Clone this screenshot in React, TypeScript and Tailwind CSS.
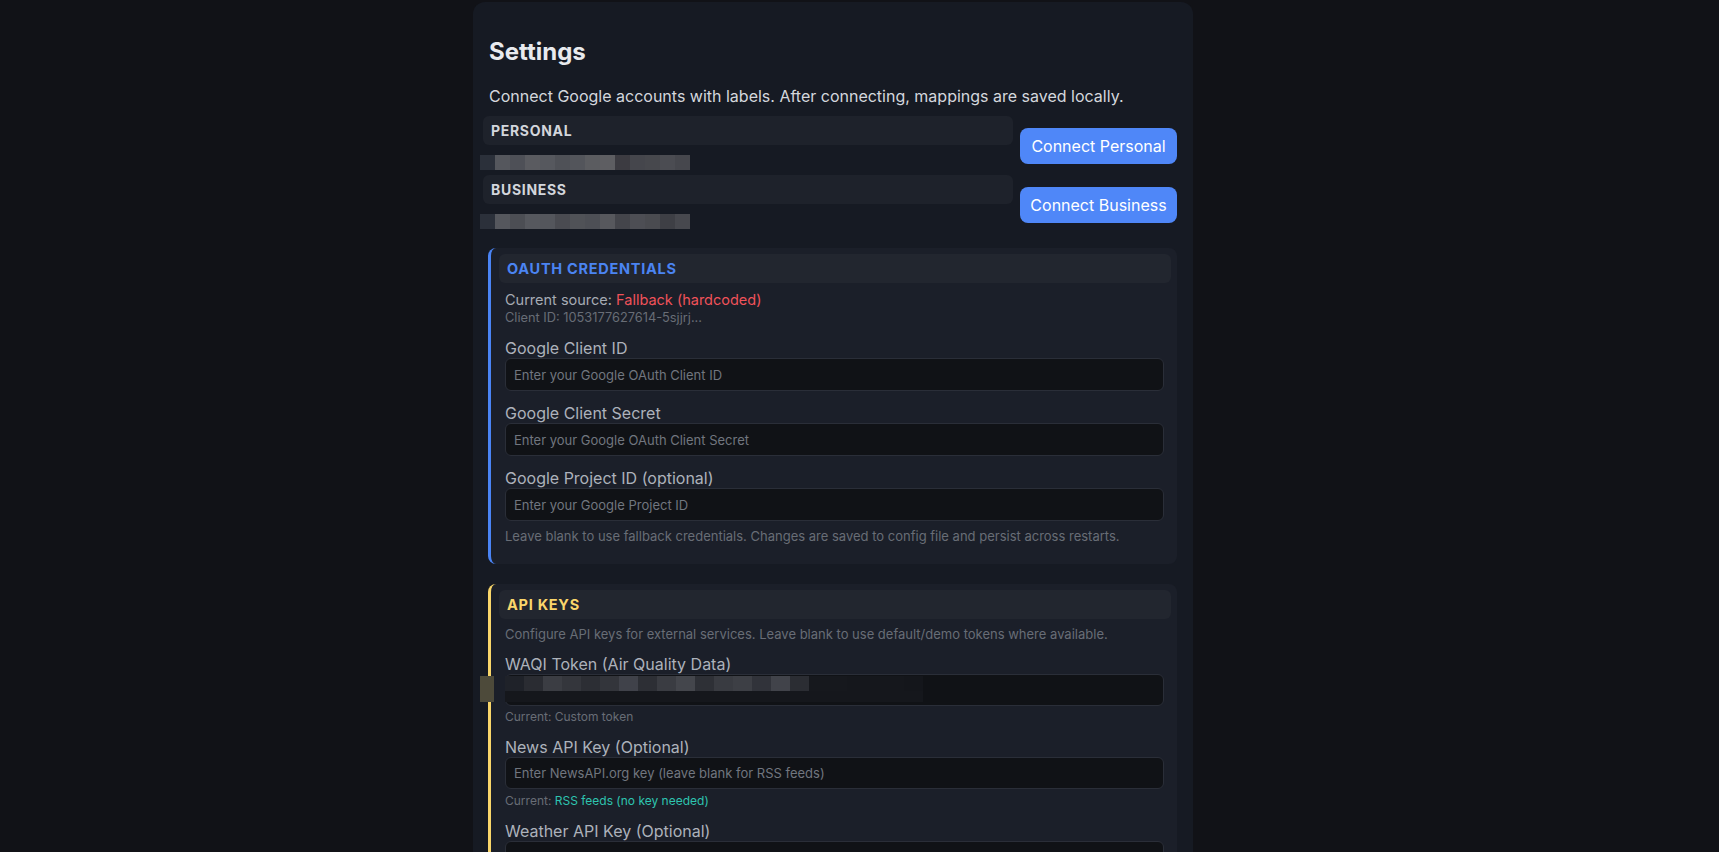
import React from "react";

const mosaicA = ["#2b303a", "#55575d", "#4e5057", "#5a5b60", "#56585e", "#4f5157", "#53555b", "#5b5c60", "#5e5e62", "#3c3b41", "#45464c", "#47484d", "#4b4c52", "#46474d"];
const mosaicB = ["#2b303a", "#55575d", "#4c4e54", "#56585e", "#54565c", "#4a4b51", "#505257", "#4d4f55", "#57585d", "#44454b", "#4d4e54", "#4a4b50", "#3e3f45", "#47484e"];
const mosaicC = ["#1f2229", "#2a2c32", "#3b3d43", "#34363c", "#2c2e34", "#33353b", "#40424a", "#2d2f35", "#3a3c42", "#44464c", "#2e3036", "#393b41", "#3d3f45", "#31333a", "#41434a", "#2b2d33", "#16181d", "#16181d", "#15171c", "#15171c", "#15171c", "#14161b"];

const Mosaic = ({ shades }: { shades: string[] }) => (
  <div className="flex h-[15px]">
    {shades.map((c, i) => (
      <div key={i} className="w-[15px] h-full" style={{ backgroundColor: c }} />
    ))}
  </div>
);

const AccountRow = ({ label, shades, button }: { label: string; shades: string[]; button: string }) => (
  <div className="flex items-center gap-[7px]">
    <div className="flex-1 -ml-[6px] h-[59px]">
      <div className="h-[29px] rounded-md bg-[#1e222b] pl-2 flex items-center text-[14px] font-bold tracking-wider text-[#d3d6dc]">
        {label}
      </div>
      <div className="mt-[10px] -ml-[3px]">
        <Mosaic shades={shades} />
      </div>
    </div>
    <button className="w-[157px] h-[36px] rounded-lg bg-[#4f87f8] text-white text-[16px]">
      {button}
    </button>
  </div>
);

const Field = ({ label, placeholder, h = "h-[33px]" }: { label: string; placeholder: string; h?: string }) => (
  <div>
    <div className="text-[16px] leading-5 text-[#adb2bb]">{label}</div>
    <input
      placeholder={placeholder}
      className={`w-full ${h} rounded-md bg-[#101216] border border-[#2a2e38] px-2 text-[13px] text-[#d1d5db] placeholder:text-[#71767f] outline-none`}
    />
  </div>
);

const Card = ({ accent, title, titleColor, children }: { accent: string; title: string; titleColor: string; children: React.ReactNode }) => (
  <div className={`rounded-lg bg-[#1b1f29] border-l-[3px] ${accent} pt-1.5 pb-5`}>
    <div className={`ml-2 mr-1.5 h-[29px] rounded-md bg-[#22262f] pl-2 flex items-center text-[14.5px] font-bold tracking-wider ${titleColor}`}>
      {title}
    </div>
    <div className="pl-[14px] pr-[13px]">{children}</div>
  </div>
);

export default function App() {
  return (
    <div className="min-h-screen bg-[#111217] flex justify-center pr-[53px]" style={{ fontFamily: "Inter, 'Noto Sans', sans-serif" }}>
      <div className="w-[720px] mt-0.5 rounded-xl bg-[#161a23] px-4 pt-[34px] pb-8">
        <h1 className="text-2xl leading-8 font-bold text-[#e8eaee]">Settings</h1>
        <p className="mt-4 text-[16px] leading-6 text-[#d4d7dd]">
          Connect Google accounts with labels. After connecting, mappings are saved locally.
        </p>

        <div className="mt-2">
          <AccountRow label="PERSONAL" shades={mosaicA} button="Connect Personal" />
          <AccountRow label="BUSINESS" shades={mosaicB} button="Connect Business" />
        </div>

        <div className="mt-[14px] -ml-px">
          <Card accent="border-[#4a84f5]" title="OAUTH CREDENTIALS" titleColor="text-[#4b84f2]">
            <div className="mt-[7px] text-[14.5px] leading-5 text-[#a6abb4]">
              Current source: <span className="text-[#f0525a]">Fallback (hardcoded)</span>
            </div>
            <div className="text-[12.8px] leading-4 text-[#686d76]">Client ID: 1053177627614-5sjjrj...</div>
            <div className="mt-3 flex flex-col gap-3">
              <Field label="Google Client ID" placeholder="Enter your Google OAuth Client ID" />
              <Field label="Google Client Secret" placeholder="Enter your Google OAuth Client Secret" />
              <Field label="Google Project ID (optional)" placeholder="Enter your Google Project ID" />
            </div>
            <div className="mt-[7px] text-[13px] leading-4 text-[#686d76]">
              Leave blank to use fallback credentials. Changes are saved to config file and persist across restarts.
            </div>
          </Card>
        </div>

        <div className="mt-5 -ml-px">
          <Card accent="border-[#f9d66a]" title="API KEYS" titleColor="text-[#fbd66b]">
            <div className="mt-[7px] text-[13px] leading-4 text-[#686d76]">
              Configure API keys for external services. Leave blank to use default/demo tokens where available.
            </div>
            <div className="mt-3">
              <div className="text-[16px] leading-5 text-[#adb2bb]">WAQI Token (Air Quality Data)</div>
              <div className="relative">
                <div className="w-full h-8 rounded-md bg-[#101216] border border-[#2a2e38]" />
                <div className="absolute -left-[25px] top-[2px] flex h-[26px]">
                  <div className="w-[14px] h-full bg-[#4d4a3a]" />
                  <div className="w-[11px] h-full bg-[#1b1f29]" />
                  <div className="flex flex-col">
                    <div className="flex h-[15px]">
                      {mosaicC.map((c, i) => (
                        <div key={i} className="w-[19px] h-full" style={{ backgroundColor: c }} />
                      ))}
                    </div>
                    <div className="h-[11px] w-[418px] bg-[#15171c]" />
                  </div>
                </div>
              </div>
              <div className="mt-[3px] text-[12px] leading-4 text-[#686d76]">Current: Custom token</div>
            </div>
            <div className="mt-3">
              <Field label="News API Key (Optional)" placeholder="Enter NewsAPI.org key (leave blank for RSS feeds)" h="h-8" />
              <div className="mt-1 text-[12px] leading-4 text-[#686d76]">
                Current: <span className="text-[#2ec4b0]">RSS feeds (no key needed)</span>
              </div>
            </div>
            <div className="mt-3">
              <Field label="Weather API Key (Optional)" placeholder="Enter weather API key" h="h-8" />
            </div>
          </Card>
        </div>
      </div>
    </div>
  );
}
